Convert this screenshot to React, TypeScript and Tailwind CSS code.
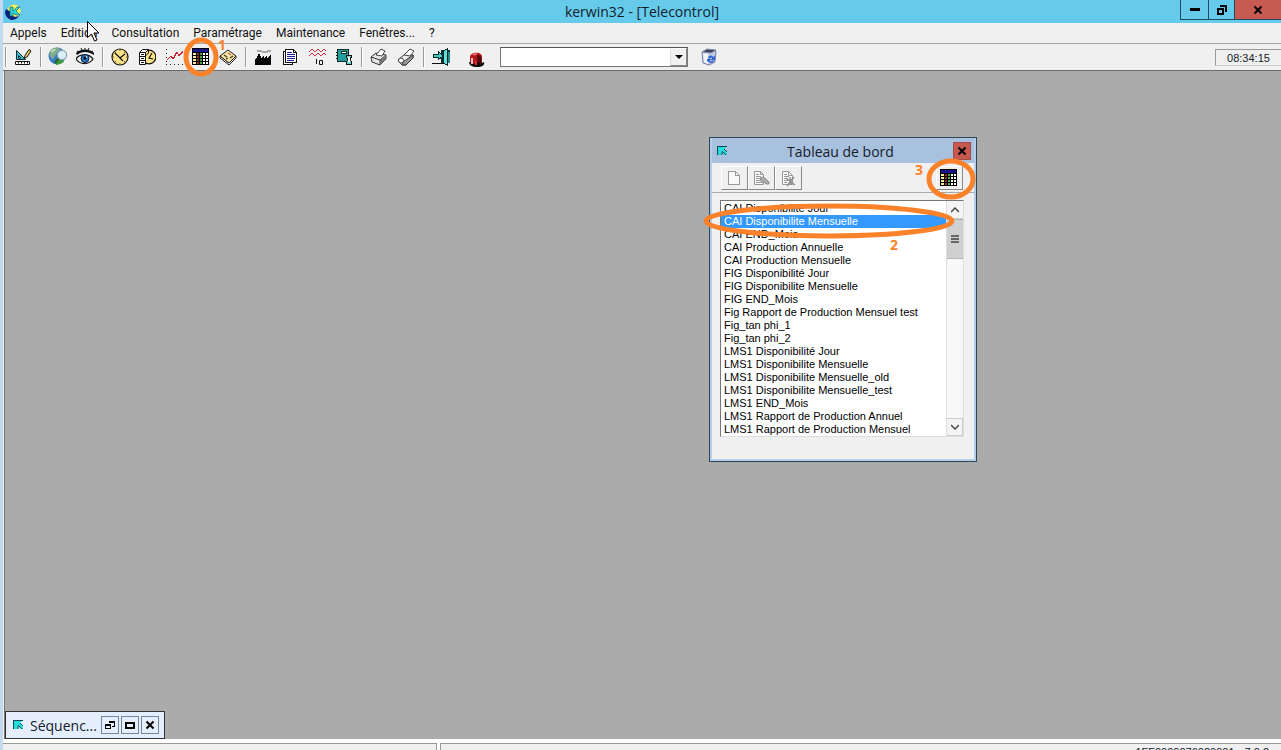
import React, { useState } from 'react';

const ENTRIES = [
    'CAI Disponibilité Jour',
    'CAI Disponibilite Mensuelle',
    'CAI END_Mois',
    'CAI Production Annuelle',
    'CAI Production Mensuelle',
    'FIG Disponibilité Jour',
    'FIG Disponibilite Mensuelle',
    'FIG END_Mois',
    'Fig Rapport de Production Mensuel test',
    'Fig_tan phi_1',
    'Fig_tan phi_2',
    'LMS1 Disponibilité Jour',
    'LMS1 Disponibilite Mensuelle',
    'LMS1 Disponibilite Mensuelle_old',
    'LMS1 Disponibilite Mensuelle_test',
    'LMS1 END_Mois',
    'LMS1 Rapport de Production Annuel',
    'LMS1 Rapport de Production Mensuel',
];

const MENUS = ['Appels', 'Edition', 'Consultation', 'Paramétrage', 'Maintenance', 'Fenêtres...', '?'];

interface IconProps {
    children: React.ReactNode;
    size?: number;
    smooth?: boolean;
}

const Icon = ({ children, size = 18, smooth = false }: IconProps) => (
    <svg
        width={size}
        height={size}
        viewBox={`0 0 ${size} ${size}`}
        fill="none"
        shapeRendering={smooth ? 'auto' : 'crispEdges'}
        aria-hidden="true"
        className="shrink-0"
    >
        {children}
    </svg>
);

const AppLogo = () => (
    <Icon size={16} smooth>
        <circle cx="9" cy="7" r="6.5" fill="#f4ef5a" />
        <path d="M1 5a7 7 0 1 0 13 7c-4 2-8 0-8-4z" fill="#10207c" />
        <path d="M5 3h3v4l4-4h3l-4 4 4 4h-4L8 9v3H5z" fill="#27d5d8" stroke="#0c5560" strokeWidth=".6" />
    </Icon>
);

const KLogo = () => (
    <Icon size={12} smooth>
        <path d="M1 1h10L8 4l3 4v2H9L6 7v3H2V2z" fill="#25dcdc" />
        <path d="M1 1.500h10M1.500 2v8M8 4l3 3M6 6l4 4M6 7v3" stroke="#0b4a52" />
    </Icon>
);

const DesignIcon = () => (
    <Icon smooth>
        <path d="M2.500 2.500l9 9h-9z" fill="#2fc4cf" stroke="#0a2a3a" />
        <path d="M4.500 7.500l2.500 2.500h-2.500z" fill="#fff" stroke="#0a2a3a" />
        <path d="M1.500 13.500h14v3h-14z" fill="#fff" stroke="#111" />
        <path d="M4.500 14v1.500M7.500 14v1.500M10.500 14v1.500M13.500 14v1.500" stroke="#111" />
        <path d="M10 10.500l1-3 4-6 2 1.500-4 6z" fill="#f2d35b" stroke="#111" />
    </Icon>
);

const GlobeIcon = () => (
    <Icon size={20} smooth>
        <circle cx="9" cy="9" r="8.5" fill="#3b78c8" />
        <path d="M2 4c3-4 9-4 10-2 0 2-3 3-4 6-2 1-2 5-4 4-2-2-3-5-2-8z" fill="#7fae8c" />
        <path d="M8 13l6-1 2 3-4 2-4 1z" fill="#3f9c34" />
        <path d="M3 4c2-2 4-2 5-2-1 2-3 2-4 4z" fill="#c5e6b8" />
        <path d="M11 11l-4 5" stroke="#1d6a34" strokeWidth="2.500" />
        <circle cx="14" cy="8" r="4.6" fill="#d9f0fb" stroke="#8ba3b5" strokeWidth="1.3" />
    </Icon>
);

const EyeIcon = () => (
    <Icon smooth>
        <path d="M0 5c4-4 12-5 18 0v2C12 3 6 3 1 7z" fill="#0b0f18" />
        <path d="M1 3l2 1M5 0l1 2M9 0v2M13 0l-1 2M17 3l-2 1" stroke="#111" />
        <path d="M0 11c3-5 13-6 17 0-4 6-13 6-17 0z" fill="#fff" stroke="#111" strokeWidth="1.3" />
        <circle cx="9" cy="10.500" r="4" fill="#2f74b8" stroke="#0a2140" />
        <circle cx="9" cy="10" r="1.600" fill="#05080d" />
        <circle cx="10.500" cy="9" r=".8" fill="#fff" />
    </Icon>
);

const ClockIcon = () => (
    <Icon smooth>
        <circle cx="9" cy="9" r="8" fill="#fbe389" stroke="#151208" strokeWidth="1.2" />
        <path d="M9 2v1M9 15v1M2 9h1M15 9h1M4 4l1 1M14 4l-1 1M4 14l1-1M14 14l-1-1" stroke="#6d5a20" />
        <path d="M4 5l5 5 5-4M9 10l3 3" stroke="#151208" strokeWidth="1.3" />
    </Icon>
);

const HistoryIcon = () => (
    <Icon smooth>
        <circle cx="11" cy="9" r="6.800" fill="#fbe389" stroke="#151208" strokeWidth="1.2" />
        <path d="M14 5l-3 5 4 1" stroke="#151208" strokeWidth="1.2" />
        <path d="M1.500 4.500l3-3h6l-3 3v12h-6z" fill="#fff" stroke="#111" />
        <path d="M1.500 4.500h6M1.500 8.500h6M1.500 12.500h6M3 6.500h3M3 10.500h3M3 14.500h3M10.500 2v3l-3 3" stroke="#111" />
    </Icon>
);

const CurveIcon = () => (
    <Icon>
        <path d="M1.500 1v16" stroke="#222" strokeDasharray="1 3" />
        <path d="M1 16.500h17" stroke="#222" strokeDasharray="1 3" />
        <path d="M2 12l4-4 2 3 4-7 2 4 4-5" stroke="#c41f30" strokeWidth="1.200" />
    </Icon>
);

const TableIcon = () => (
    <Icon>
        <path d="M0 0h17v17H0z" fill="#000" />
        <path d="M1 1h15v3H1z" fill="#16168a" />
        <path d="M1 5h3v11H1z" fill="#f3ec9c" />
        <path d="M5 5h2v11H5z" fill="#a02820" />
        <path d="M8 5h2v11H8z" fill="#3fae3f" />
        <path d="M11 5h2v11h-2zM14 5h2v11h-2z" fill="#fff" />
        <path d="M0 7h17v1H0zM0 10h17v1H0zM0 13h17v1H0z" fill="#000" />
    </Icon>
);

const BookIcon = () => (
    <Icon smooth>
        <path d="M1 8v2l9 7 7-7V8l-7 7z" fill="#fff" stroke="#222" />
        <path d="M1 8l8-6 8 6-7 7z" fill="#f3e3a4" stroke="#222" />
        <path d="M5 7l3 2M7 11l2-1M11 10l3-2" stroke="#3c3413" strokeWidth="1.200" />
        <path d="M9 5l3 2" stroke="#b23a2b" />
    </Icon>
);

const FactoryIcon = () => (
    <Icon>
        <path d="M1 17v-6l2-1 1-4h2l1 4 3-2v2l3-2v2l4-3v10z" fill="#050505" />
        <path d="M3 2h4l1 1h4l1-1h4v2h-3l-1 1H8L7 4H3z" fill="#a9a9a9" />
    </Icon>
);

const ReportIcon = () => (
    <Icon>
        <path d="M2.500 3.500h9v13h-9z" fill="#fff" stroke="#111" />
        <path d="M4.500 1.500h8l3 3v10h-11z" fill="#fff" stroke="#111" />
        <path d="M12.500 1.500v3h3" stroke="#111" />
        <path d="M6 4.500h5M6 6.500h8M6 8.500h8M6 10.500h8M6 12.500h7" stroke="#1c1c9c" />
    </Icon>
);

const WaveIcon = () => (
    <Icon smooth>
        <path d="M1 4l3-3 3 3 3-3 3 3 3-3 2 2M1 8l3-3 3 3 3-3 3 3 3-3 2 2" stroke="#d22e3c" />
        <path d="M8.500 11v5M11.500 12.500h3v4h-3z" stroke="#111" />
    </Icon>
);

const ModuleIcon = () => (
    <Icon>
        <path d="M2.500 1.500h11v12h-11z" fill="#239f9b" stroke="#0a2a2a" />
        <path d="M6.500 3.500h5v2h-5z" fill="#fff" stroke="#0a2a2a" />
        <path d="M1 4.500h2M1 7.500h2M1 10.500h2" stroke="#111" />
        <path d="M11.500 7.500h5v2h-1v2l1 3v2h-5v-2l1-3z" fill="#6bd4d0" stroke="#111" />
        <path d="M13 9h2v5h-2z" fill="#fff" />
    </Icon>
);

const PrinterIcon = () => (
    <Icon smooth>
        <path d="M1 9l5-4 10 2v4l-6 6-8-3z" fill="#e5e5e5" stroke="#333" />
        <path d="M6 7l5-6 4 2-3 5z" fill="#fff" stroke="#444" />
        <path d="M1 9l9 3 6-5M10 12v5" stroke="#333" />
        <path d="M10 12l6-5v4l-6 6z" fill="#777" />
    </Icon>
);

const PlotterIcon = () => (
    <Icon smooth>
        <path d="M1 12l7-6 8 1v3l-7 7H5z" fill="#ececec" stroke="#333" />
        <path d="M7 7l6-6 4 2-4 5z" fill="#fff" stroke="#444" />
        <path d="M6 17c-1-3 1-4 3-5l7-5v3l-7 7z" fill="#999" stroke="#333" />
        <circle cx="4" cy="12.500" r="2.500" fill="#fff" stroke="#444" />
    </Icon>
);

const ExitIcon = () => (
    <Icon>
        <path d="M9 2h9v13H9z" fill="#0e3335" />
        <path d="M11 3l4-2v16l-4-2z" fill="#5ee0df" stroke="#0a2a2a" />
        <path d="M15.500 3.500h2v11h-2z" fill="#27888a" />
        <path d="M1 6h5V3l5 5-5 4V9H1z" fill="#43c9c9" stroke="#0a2a2a" />
        <path d="M0 15.500h12" stroke="#111" />
    </Icon>
);

const AlarmIcon = () => (
    <Icon smooth>
        <path d="M3 15V7c0-5 12-6 12 0v8z" fill="#b3151b" />
        <path d="M10 5c4 0 5 2 5 10l-4 1z" fill="#520b0d" />
        <path d="M2 12c0 3 3 5 8 5s8-2 7-5l-4 2-3-3-3 3z" fill="#0b0505" />
        <path d="M6 5c1-1 3-1 4-1" stroke="#f5837d" strokeWidth="1.500" />
        <path d="M5 8v6" stroke="#fff" strokeWidth="1.500" />
        <path d="M9 11v4" stroke="#e12a2c" strokeWidth="2" />
    </Icon>
);

const BinIcon = () => (
    <Icon smooth>
        <path d="M2 4l1 11 6 2 6-3 1-11z" fill="#c3cbe0" stroke="#7680a4" />
        <path d="M2 4l5-3 9 1-5 3z" fill="#3c4358" stroke="#8b93ad" />
        <path d="M3 5l5 1v10l-4-2z" fill="#f2f4fa" />
        <path d="M8 10c1-3 4-3 5-1l2-1v4h-4l1-2c-1-1-2 0-2 1zM14 13c-2 3-5 2-6 0l-1 1v-3h4l-1 2c1 1 2 0 3-1z" fill="#2d67cf" />
    </Icon>
);

const PageIcon = () => (
    <Icon>
        <path d="M3.500 2.500h7l4 4v9h-11z" fill="#f8f8f8" stroke="#999" />
        <path d="M10.500 2.500v4h4" stroke="#999" />
    </Icon>
);

const PageEditIcon = () => (
    <Icon smooth>
        <path d="M2.500 2.500h6l3 3v10h-9z" fill="#f8f8f8" stroke="#999" />
        <path d="M4 5.500h3M4 7.500h5M4 9.500h4M4 11.500h5M4 13.500h5M8.500 2.500v3h3" stroke="#999" />
        <path d="M8 9l3-1 3 2 3 3v2h-3l-2-2-2 1z" fill="#aaa" stroke="#8d8d8d" />
    </Icon>
);

const PageDeleteIcon = () => (
    <Icon smooth>
        <path d="M3.500 2.500h6l4 4v9h-10z" fill="#f8f8f8" stroke="#999" />
        <path d="M5 5.500h3M5 7.500h5M5 9.500h4M5 11.500h4M5 13.500h3M9.500 2.500v4h4" stroke="#999" />
        <path d="M7 9l9 7M15 8l-7 9M11 8l1 8" stroke="#8d8d8d" strokeWidth="1.500" />
    </Icon>
);

const RestoreIcon = () => (
    <Icon size={12}>
        <path d="M1 4h7v7H1zM3 6v3h3V6zM4 1h7v7H9V3H4z" fill="#000" fillRule="evenodd" />
    </Icon>
);

const CloseIcon = () => (
    <Icon size={10} smooth>
        <path d="M1.500 1.500l7 7M8.500 1.500l-7 7" stroke="#000" strokeWidth="2" />
    </Icon>
);

const Separator = () => <div className="mx-[3px] h-5 w-0.5 shrink-0 border-l border-[#9a9a9a] bg-white" />;

interface ToolProps {
    label: string;
    children: React.ReactNode;
}

const Tool = ({ label, children }: ToolProps) => (
    <button type="button" title={label} aria-label={label} className="relative flex h-6 w-[27px] shrink-0 items-center justify-center pr-px">
        {children}
    </button>
);

const RaisedTool = ({ label, children }: ToolProps) => (
    <button
        type="button"
        title={label}
        aria-label={label}
        className="flex h-6 w-[27px] items-center justify-center border border-t-white border-r-[#888] border-b-[#888] border-l-white bg-[#f0f0f0] pr-px"
    >
        {children}
    </button>
);

const Marker = ({ children, className }: { children: React.ReactNode; className: string }) => (
    <span className={`pointer-events-none absolute z-10 font-['Open_Sans',sans-serif] text-sm leading-3 font-bold text-[#f9822b] ${className}`}>
        {children}
    </span>
);

const TitleBar = () => (
    <header className="flex h-[23px] shrink-0 items-start bg-[#66cbea]">
        <div className="flex h-[23px] w-[101px] items-center pl-[2px]">
            <AppLogo />
        </div>
        <h1 className="flex-1 text-center text-sm leading-6">kerwin32 - [Telecontrol]</h1>
        <div className="flex h-5 border-b border-l border-[#1d4c5e]">
            <button type="button" aria-label="Réduire" className="flex w-7 items-center justify-center border-r border-[#1d4c5e]">
                <span className="h-[3px] w-2.5 bg-black" />
            </button>
            <button type="button" aria-label="Restaurer" className="flex w-[26px] items-center justify-center border-r border-[#1d4c5e]">
                <RestoreIcon />
            </button>
            <button type="button" aria-label="Fermer" className="flex w-[46px] items-center justify-center bg-[#c75a52]">
                <CloseIcon />
            </button>
        </div>
    </header>
);

const Toolbar = () => (
    <div className="flex h-[27px] shrink-0 items-center border-b border-[#6b6b6b]">
        <div className="mr-[3px] ml-0.5 h-5 w-0.5 shrink-0 border-l border-[#9a9a9a] bg-white" />
        <Tool label="Conception"><DesignIcon /></Tool>
        <Separator />
        <Tool label="Réseau"><GlobeIcon /></Tool>
        <Tool label="Surveillance"><EyeIcon /></Tool>
        <Separator />
        <Tool label="Horloge"><ClockIcon /></Tool>
        <Tool label="Historique"><HistoryIcon /></Tool>
        <Tool label="Courbes"><CurveIcon /></Tool>
        <Tool label="Tableau de bord">
            <TableIcon />
            <svg className="pointer-events-none absolute -top-2 -left-[5px] z-10" width="36" height="40" fill="none" aria-hidden="true">
                <ellipse cx="18" cy="20" rx="15" ry="17" stroke="#f9822b" strokeWidth="5" />
            </svg>
            <Marker className="-top-1.5 left-[30px]">1</Marker>
        </Tool>
        <Tool label="Journal"><BookIcon /></Tool>
        <Separator />
        <Tool label="Usine"><FactoryIcon /></Tool>
        <Tool label="Rapport"><ReportIcon /></Tool>
        <Tool label="Signaux"><WaveIcon /></Tool>
        <Tool label="Modules"><ModuleIcon /></Tool>
        <Separator />
        <Tool label="Imprimer"><PrinterIcon /></Tool>
        <Tool label="Traceur"><PlotterIcon /></Tool>
        <Separator />
        <Tool label="Quitter"><ExitIcon /></Tool>
        <div className="ml-2 flex items-end pt-1">
            <Tool label="Alarmes"><AlarmIcon /></Tool>
        </div>
        <div className="relative ml-2.5 h-5 w-[188px] shrink-0 border border-[#777] border-t-[#555] bg-white">
            <select aria-label="Poste" className="block h-[18px] w-full appearance-none bg-white pr-5 text-[11px] leading-4 outline-none">
                <option></option>
            </select>
            <span className="pointer-events-none absolute inset-y-0 right-0 flex w-[17px] items-center justify-center border border-t-white border-r-[#888] border-b-[#888] border-l-[#ddd] bg-[#f0f0f0]">
                <Icon size={8} smooth><path d="M0 2h8L4 6z" fill="#000" /></Icon>
            </span>
        </div>
        <div className="ml-2"><Tool label="Corbeille"><BinIcon /></Tool></div>
        <time className="ml-auto h-[17px] w-[66px] shrink-0 border border-r-0 border-[#999] border-b-[#ccc] text-center font-['Liberation_Sans',Arial,sans-serif] text-[11px] leading-4">
            08:34:15
        </time>
    </div>
);

const Scrollbar = () => (
    <div className="flex w-[17px] shrink-0 flex-col border-l border-[#ddd] bg-[#f8f8f8]">
        <button type="button" aria-label="Défiler vers le haut" className="flex h-[18px] items-center justify-center border-b border-[#ccc] bg-[#f4f4f4]">
            <Icon size={8} smooth><path d="M0 6l4-4 4 4" stroke="#444" strokeWidth="1.500" /></Icon>
        </button>
        <div className="flex h-10 items-center justify-center border-y border-[#b5b5b5] bg-[#d0d0d0]">
            <Icon size={8}><path d="M0 0h8v2H0zM0 3h8v2H0zM0 6h8v2H0z" fill="#666" /></Icon>
        </div>
        <button type="button" aria-label="Défiler vers le bas" className="mt-auto flex h-[18px] items-center justify-center border border-l-0 border-[#ccc] bg-[#f4f4f4]">
            <Icon size={8} smooth><path d="M0 2l4 4 4-4" stroke="#444" strokeWidth="1.500" /></Icon>
        </button>
    </div>
);

const DashboardWindow = () => {
    const [selected, setSelected] = useState(1);

    return (
        <section className="absolute top-[66px] left-[704px] w-[268px] border border-[#2d4656] bg-[#b4cde8] px-0.5 pb-0.5">
            <div className="flex h-[25px] items-center bg-[#a8c1de] pr-[3px] pl-1">
                <KLogo />
                <h2 className="flex-1 pt-0.5 text-center text-sm leading-6">Tableau de bord</h2>
                <button type="button" aria-label="Fermer le tableau" className="flex h-[18px] w-[18px] items-center justify-center border border-[#a34c4c] bg-[#c6584f]">
                    <CloseIcon />
                </button>
            </div>
            <div className="bg-[#f0f0f0] pb-[22px]">
                <div className="flex h-[30px] items-center border-b border-[#aaa] pr-[11px] pl-[9px]">
                    <RaisedTool label="Nouveau"><PageIcon /></RaisedTool>
                    <RaisedTool label="Modifier"><PageEditIcon /></RaisedTool>
                    <RaisedTool label="Supprimer"><PageDeleteIcon /></RaisedTool>
                    <div className="relative ml-auto">
                        <RaisedTool label="Afficher"><TableIcon /></RaisedTool>
                        <svg className="pointer-events-none absolute -top-2 -left-2.5 z-10" width="50" height="42" fill="none" aria-hidden="true">
                            <ellipse cx="25" cy="21" rx="22" ry="18" stroke="#f9822b" strokeWidth="5" />
                        </svg>
                        <Marker className="-top-0.5 -left-[21px]">3</Marker>
                    </div>
                </div>
                <div className="relative mr-2.5 mt-[7px] ml-2 flex border border-t-[#777] border-r-[#ddd] border-b-[#ddd] border-l-[#777] bg-white">
                    <ul role="listbox" aria-label="Tableaux de bord" className="min-w-0 flex-1 pt-px font-['Liberation_Sans',Arial,sans-serif] text-[11px] leading-[13px]">
                        {ENTRIES.map((entry, i) => (
                            <li key={entry} role="presentation">
                                <button
                                    type="button"
                                    role="option"
                                    aria-selected={i === selected}
                                    onClick={() => setSelected(i)}
                                    className={`block w-full truncate pl-[3px] text-left ${i === selected ? 'bg-[#3399ff] text-white' : 'text-black'}`}
                                >
                                    {entry}
                                </button>
                            </li>
                        ))}
                    </ul>
                    <Scrollbar />
                    <svg className="pointer-events-none absolute top-0.5 -left-5 z-10" width="256" height="36" fill="none" aria-hidden="true">
                        <ellipse cx="128" cy="18" rx="123" ry="15" stroke="#f9822b" strokeWidth="5" />
                    </svg>
                    <Marker className="top-[38px] left-[169px]">2</Marker>
                </div>
            </div>
        </section>
    );
};

const SequenceWindow = () => (
    <section className="absolute bottom-0 left-0 flex h-7 w-40 items-center border border-[#333] bg-[#e5eefc] pr-[5px] pl-1.5">
        <KLogo />
        <h2 className="ml-1.5 flex-1 pt-0.5 text-sm leading-6">Séquenc...</h2>
        <div className="flex gap-0.5">
            <button type="button" aria-label="Restaurer Séquence" className="flex h-[18px] w-[18px] items-center justify-center border border-[#75859b]">
                <Icon size={12}>
                    <path d="M1 5h6v5H1zM2 7v2h4V7zM5 2h6v6H8V7h2V4H5z" fill="#000" fillRule="evenodd" />
                </Icon>
            </button>
            <button type="button" aria-label="Agrandir Séquence" className="flex h-[18px] w-[18px] items-center justify-center border border-[#75859b]">
                <span className="h-[7px] w-2.5 border-2 border-black" />
            </button>
            <button type="button" aria-label="Fermer Séquence" className="flex h-[18px] w-[18px] items-center justify-center border border-[#75859b]">
                <CloseIcon />
            </button>
        </div>
    </section>
);

const App = () => (
    <div className="relative flex h-screen overflow-hidden bg-[#c5d9ee] font-['Open_Sans','Noto_Sans',sans-serif] text-[#14202a]">
        <div className="w-[3px] shrink-0" />
        <div className="flex min-w-0 flex-1 flex-col bg-[#f0f0f0]">
            <TitleBar />
            <nav className="flex h-[21px] shrink-0 items-center gap-3.5 border-b border-[#a5a5a5] pl-[7px] font-[Roboto,'Noto_Sans',sans-serif] text-xs text-[#111]">
                {MENUS.map((menu) => (
                    <button key={menu} type="button">{menu}</button>
                ))}
            </nav>
            <Toolbar />
            <main className="relative ml-px min-h-0 flex-1 border-l border-[#777] bg-[#ababab]">
                <DashboardWindow />
                <SequenceWindow />
            </main>
            <footer className="-mb-3 flex h-[23px] shrink-0 gap-[3px] bg-white pt-1 font-['Liberation_Sans',Arial,sans-serif] text-[11px] leading-4">
                <div className="w-[434px] border border-l-0 border-[#999] bg-[#f0f0f0]" />
                <div className="flex flex-1 justify-end gap-2.5 border border-r-0 border-[#999] bg-[#f0f0f0] pr-3">
                    <span>1FF0000076020001</span>
                    <span>7.0.2</span>
                </div>
            </footer>
        </div>

        {/* Mouse pointer */}
        <svg className="pointer-events-none absolute top-[21px] left-[87px] z-20" width="13" height="21" viewBox="0 0 13 21" aria-hidden="true">
            <path d="M.5.5v16l4-3.500 3 7 2.500-1-3-7H12z" fill="#fff" stroke="#000" />
        </svg>
    </div>
);

export default App;
